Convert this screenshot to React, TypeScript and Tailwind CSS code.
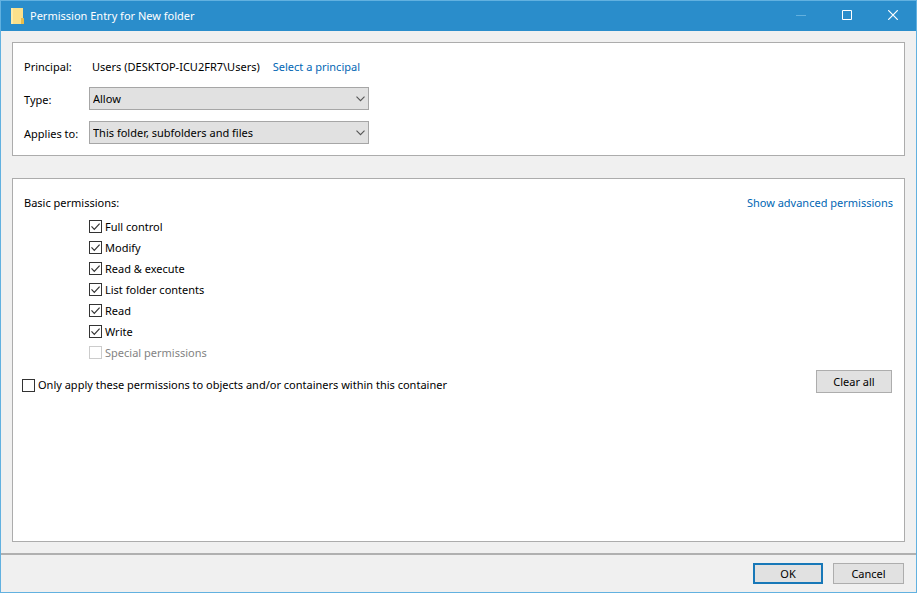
import { useState } from "react";

type Permission = {
  id: string;
  label: string;
  checked: boolean;
  disabled?: boolean;
};

const initialPermissions: Permission[] = [
  { id: "full", label: "Full control", checked: true },
  { id: "modify", label: "Modify", checked: true },
  { id: "execute", label: "Read & execute", checked: true },
  { id: "list", label: "List folder contents", checked: true },
  { id: "read", label: "Read", checked: true },
  { id: "write", label: "Write", checked: true },
  { id: "special", label: "Special permissions", checked: false, disabled: true }
];

function FolderIcon() {
  return (
    <svg width="14" height="16" viewBox="0 0 14 16" aria-hidden="true">
      <path d="M1 0h12v10l1 1v5H1z" fill="#fbe08a" />
      <path d="M1 0h2v16H1z" fill="#fdebaa" />
      <path d="M11 10h2l1 1v5h-3z" fill="#e9bd4c" />
    </svg>
  );
}

function TitleBar() {
  return (
    <header className="flex h-[30px] shrink-0 items-center bg-[#2a8dcb] pl-[9px] text-white">
      <FolderIcon />
      <h1 className="ml-[6px] flex-1 leading-4">Permission Entry for New folder</h1>
      <button type="button" aria-label="Minimize" disabled className="flex h-full w-[46px] items-center justify-center pb-[2px]">
        <svg width="10" height="10" viewBox="0 0 10 10">
          <path d="M0 5.5h10" stroke="#62b0de" />
        </svg>
      </button>
      <button type="button" aria-label="Maximize" className="flex h-full w-[46px] items-center justify-center pb-[2px]">
        <svg width="10" height="10" viewBox="0 0 10 10">
          <path d="M.5 .5h9v9h-9z" fill="none" stroke="white" />
        </svg>
      </button>
      <button type="button" aria-label="Close" className="flex h-full w-[46px] items-center justify-center pb-[2px]">
        <svg width="10" height="10" viewBox="0 0 10 10">
          <path d="M.2 .2l9.6 9.6M9.8 .2L.2 9.8" stroke="white" strokeWidth="1.2" />
        </svg>
      </button>
    </header>
  );
}

function SelectField({ id, label, options }: { id: string; label: string; options: string[] }) {
  return (
    <div className="flex h-[23px] items-center">
      <label htmlFor={id} className="w-[65px] shrink-0 pt-[2px]">
        {label}
      </label>
      <div className="relative h-full w-[280px]">
        <select
          id={id}
          className="h-full w-full appearance-none border border-[#a6a6a6] bg-[#e1e1e1] pl-[3px] pr-6 leading-4"
        >
          {options.map((option) => (
            <option key={option}>{option}</option>
          ))}
        </select>
        <svg
          width="9"
          height="6"
          viewBox="0 0 9 6"
          className="pointer-events-none absolute right-1 top-[9px]"
          aria-hidden="true"
        >
          <path d="M.5 .7l4 4 4-4" fill="none" stroke="#555" strokeWidth="1.1" />
        </svg>
      </div>
    </div>
  );
}

type CheckboxProps = {
  label: string;
  checked: boolean;
  disabled?: boolean;
  onChange: () => void;
};

function Checkbox({ label, checked, disabled, onChange }: CheckboxProps) {
  return (
    <label className={disabled ? "flex items-center gap-[3px] text-[#838383]" : "flex items-center gap-[3px]"}>
      <span className="relative h-[13px] w-[13px]">
        <input
          type="checkbox"
          checked={checked}
          disabled={disabled}
          onChange={onChange}
          className="block h-[13px] w-[13px] appearance-none border border-[#333] bg-white disabled:border-[#ccc]"
        />
        {checked ? (
          <svg viewBox="0 0 13 13" className="pointer-events-none absolute inset-0" aria-hidden="true">
            <path d="M2.5 6.4l2.8 2.9 5.3-5.6" fill="none" stroke="#333" strokeWidth="1.2" />
          </svg>
        ) : null}
      </span>
      {label}
    </label>
  );
}

export default function App() {
  const [permissions, setPermissions] = useState(initialPermissions);
  const [onlyContainer, setOnlyContainer] = useState(false);

  const toggle = (id: string) => {
    setPermissions((items) => items.map((item) => (item.id === id ? { ...item, checked: !item.checked } : item)));
  };

  return (
    <div className="flex min-h-screen flex-col border border-[#62b1e0] bg-[#f0f0f0] font-['Noto_Sans',sans-serif] text-[11px] leading-4 text-black">
      <TitleBar />

      <main className="flex flex-1 flex-col gap-[22px] p-[11px]">
        <section className="flex flex-col gap-[11px] border border-[#acacac] bg-white px-[11px] pb-[11px] pt-4">
          <div className="flex h-[17px] items-start">
            <span className="w-[65px] shrink-0">Principal:</span>
            <span className="pl-[3px]">Users (DESKTOP-ICU2FR7\Users)</span>
            <a href="#principal" className="ml-[13px] text-[#0066b4]">
              Select a principal
            </a>
          </div>
          <SelectField id="type" label="Type:" options={["Allow", "Deny"]} />
          <SelectField
            id="applies"
            label="Applies to:"
            options={["This folder, subfolders and files", "This folder only", "Files only"]}
          />
        </section>

        <section className="flex-1 border border-[#acacac] bg-white pt-4">
          <div className="flex justify-between px-[11px]">
            <h2>Basic permissions:</h2>
            <a href="#advanced" className="text-[#0066b4]">
              Show advanced permissions
            </a>
          </div>
          <ul className="mt-[5px] pl-[76px]">
            {permissions.map((item) => (
              <li key={item.id} className="flex h-[21px] items-center">
                <Checkbox
                  label={item.label}
                  checked={item.checked}
                  disabled={item.disabled}
                  onChange={() => toggle(item.id)}
                />
              </li>
            ))}
          </ul>
          <div className="mt-[7px] flex items-end justify-between pl-[9px] pr-3">
            <Checkbox
              label="Only apply these permissions to objects and/or containers within this container"
              checked={onlyContainer}
              onChange={() => setOnlyContainer(!onlyContainer)}
            />
            <button type="button" className="h-[23px] w-[76px] border border-[#adadad] bg-[#e1e1e1]">
              Clear all
            </button>
          </div>
        </section>
      </main>

      <footer className="flex justify-end gap-[10px] border-t-2 border-[#b0b0b0] px-3 py-2">
        <button
          type="button"
          className="flex h-[21px] w-[70px] items-center justify-center border-2 border-[#1878b8] bg-[#e1e1e1]"
        >
          OK
        </button>
        <button
          type="button"
          className="flex h-[21px] w-[71px] items-center justify-center border border-[#adadad] bg-[#e1e1e1]"
        >
          Cancel
        </button>
      </footer>
    </div>
  );
}
